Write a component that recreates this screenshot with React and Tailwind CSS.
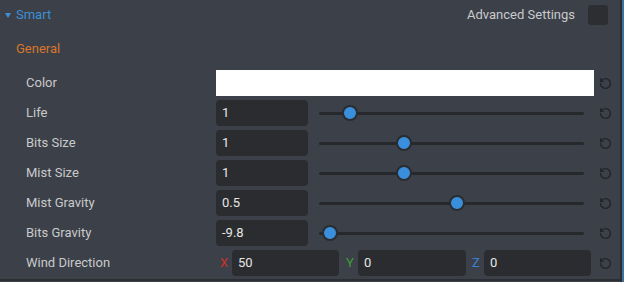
import { RotateCcw } from "lucide-react";

const sliders = [
  { label: "Life", value: "1", pct: 11.7 },
  { label: "Bits Size", value: "1", pct: 32 },
  { label: "Mist Size", value: "1", pct: 32 },
  { label: "Mist Gravity", value: "0.5", pct: 52 },
  { label: "Bits Gravity", value: "-9.8", pct: 4 },
];

function Reset() {
  return (
    <div className="w-[22px] flex items-center justify-center">
      <RotateCcw size={13} strokeWidth={2.5} className="text-[#222428]" />
    </div>
  );
}

function Row({ label, children }) {
  return (
    <div className="flex h-[30px] items-center pl-[26px]">
      <div className="w-[190px] text-[13px] text-[#c9cacc]">{label}</div>
      <div className="w-[378px] flex items-center">{children}</div>
      <Reset />
    </div>
  );
}

function Field({ value, className = "" }) {
  return (
    <div className={`h-[26px] rounded-[4px] bg-[#2a2c30] flex items-center px-[6px] text-[13px] text-[#e6e6e6] ${className}`}>
      {value}
    </div>
  );
}

function Slider({ pct }) {
  return (
    <div className="relative ml-[11px] mr-[10px] flex-1 h-[16px] flex items-center">
      <div className="w-full h-[3px] rounded bg-[#26282c]" />
      <div
        className="absolute top-1/2 -translate-y-1/2 -translate-x-1/2 w-[16px] h-[16px] rounded-full bg-[#3a8fdc] border-2 border-[#2a2c30]"
        style={{ left: `${pct}%` }}
      />
    </div>
  );
}

function Axis({ name, color, value, width }) {
  return (
    <div className="flex items-center" style={{ width }}>
      <span className={`w-[16px] text-center text-[13px] ${color}`}>{name}</span>
      <Field value={value} className="flex-1" />
    </div>
  );
}

export default function App() {
  return (
    <div className="w-[624px] h-[282px] bg-[#3c4048] flex" style={{ fontFamily: "Roboto, 'Noto Sans', sans-serif" }}>
      <div className="w-[620px] flex flex-col">
        <div className="h-[30px] flex items-center pl-[5px] pr-[12px]">
          <span className="w-0 h-0 border-l-[3.5px] border-r-[3.5px] border-t-[5px] border-l-transparent border-r-transparent border-t-[#3d8fd6] mr-[5px]" />
          <span className="text-[13px] text-[#3d8fd6]">Smart</span>
          <span className="ml-auto text-[13px] text-[#c9cacc]">Advanced Settings</span>
          <span className="ml-[13px] w-[20px] h-[20px] rounded-[3px] bg-[#2c2e32]" />
        </div>
        <div className="h-[38px] flex items-center pl-[16px] text-[13px] text-[#d8772c]">General</div>
        <Row label="Color">
          <div className="w-full h-[26px] bg-white" />
        </Row>
        {sliders.map((s) => (
          <Row key={s.label} label={s.label}>
            <Field value={s.value} className="w-[92px]" />
            <Slider pct={s.pct} />
          </Row>
        ))}
        <Row label="Wind Direction">
          <Axis name="X" color="text-[#d0302a]" value="50" width="123px" />
          <div className="w-[3px]" />
          <Axis name="Y" color="text-[#3f9d3a]" value="0" width="124px" />
          <div className="w-[2px]" />
          <Axis name="Z" color="text-[#3b7fd0]" value="0" width="123px" />
        </Row>
        <div className="h-[2px] mt-[1px] bg-[#2c2e32]" />
      </div>
      <div className="w-[2px] bg-[#2c2e32]" />
      <div className="w-[2px] bg-[#3f6f9c]" />
    </div>
  );
}
